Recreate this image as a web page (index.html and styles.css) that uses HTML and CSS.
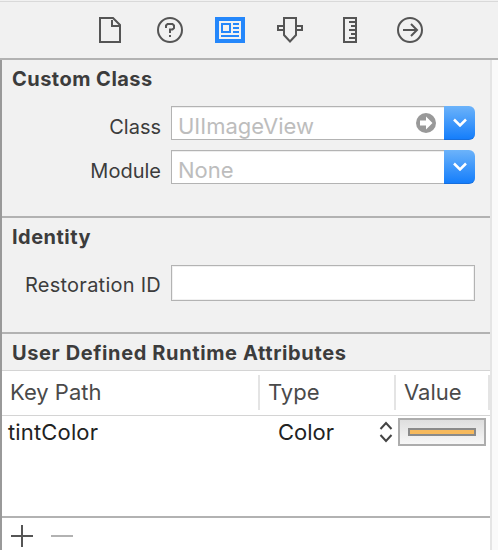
FILE: index.html
```html
<!DOCTYPE html>
<html lang="en">
<head>
<meta charset="utf-8">
<title>Identity Inspector</title>
<link rel="stylesheet" href="styles.css">
</head>
<body>
<div class="inspector">
  <nav class="toolbar">
    <svg class="icon" viewBox="0 0 30 26"><path d="M5 1h13l7 7v17H5zM17 3v6h7"/></svg>
    <svg class="icon" viewBox="0 0 30 26"><circle cx="15" cy="13" r="12"/><path d="M11 11V8.500L12.500 7h5L19 8.500V11l-1.500 1.500H15V16M15 18v2"/></svg>
    <svg class="icon selected" viewBox="0 0 30 26"><path class="blue" d="M0 0h30v26H0z"/><path class="white" d="M4 4h22v18H4z"/><path class="glyph" d="M7 7h8v8H7zM18 7h6M18 11h6M18 15h6M6 19h18"/></svg>
    <svg class="icon" viewBox="0 0 30 26"><path d="M9 1h12v17l-6 6.500L9 18zM8 9H3v4h5M22 9h5v4h-5"/></svg>
    <svg class="icon" viewBox="0 0 30 26"><path d="M9 1h12v24H9zM14 5h6M16 9h4M14 13h6M16 17h4M14 21h6"/></svg>
    <svg class="icon" viewBox="0 0 30 26"><circle cx="15" cy="13" r="12"/><path d="M8 13h13M16 7l6 6-6 6"/></svg>
  </nav>
  <div class="body">
    <main class="content">
      <section class="group custom">
        <h2>Custom Class</h2>
        <div class="row">
          <label>Class</label>
          <div class="combo"><span>UIImageView</span>
            <svg class="go" viewBox="0 0 20 20"><circle cx="10" cy="10" r="10"/><path d="M4 7.500h6V3.500l6.500 6.500-6.500 6.500v-4H4z"/></svg></div>
          <button class="drop"><svg viewBox="0 0 14 9"><path d="M1 1.500L7 7.500l6-6"/></svg></button>
        </div>
        <div class="row">
          <label>Module</label>
          <div class="combo"><span>None</span></div>
          <button class="drop"><svg viewBox="0 0 14 9"><path d="M1 1.500L7 7.500l6-6"/></svg></button>
        </div>
      </section>
      <section class="group identity">
        <h2>Identity</h2>
        <div class="row"><label class="restoration">Restoration ID</label><div class="field"></div></div>
      </section>
      <section class="attributes">
        <h2>User Defined Runtime Attributes</h2>
        <div class="head"><span>Key Path</span><span>Type</span><span>Value</span></div>
        <div class="entry">
          <span class="key">tintColor</span>
          <span class="type">Color</span>
          <svg class="stepper" viewBox="0 0 14 22"><path d="M1.500 8L7 2l5.500 6M1.500 14L7 20l5.500-6"/></svg>
          <div class="well"><div class="swatch"></div></div>
        </div>
      </section>
      <footer class="actions">
        <svg viewBox="0 0 22 22"><path d="M0 11h22M11 0v22"/></svg>
        <svg class="remove" viewBox="0 0 22 22"><path d="M0 11h22"/></svg>
      </footer>
    </main>
    <div class="track"></div>
  </div>
</div>
</body>
</html>
```
FILE: styles.css
```css
* { box-sizing: border-box; }
body { margin: 0; font: 20px/24px Inter, "Liberation Sans", sans-serif; color: #3c3c3c; overflow: hidden; }
.inspector { width: 498px; height: 550px; display: flex; flex-direction: column; background: #f1f1f1; }
.toolbar { height: 60px; border-bottom: 2px solid #b2b2b2; padding: 17px 73px 0 95px; display: flex; gap: 30px; background: linear-gradient(#f1f1f1 1px, #d9d9d9 1px, #d9d9d9 2px, #f1f1f1 2px); }
.icon { width: 30px; height: 26px; flex: none; fill: none; stroke: #555; stroke-width: 2; overflow: visible; }
.icon .blue { fill: #2487fb; stroke: none; }
.icon .white { fill: #f1f1f1; stroke: none; }
.icon .glyph { stroke: #2487fb; }
.body { display: flex; height: 490px; }
.content { width: 490px; border-left: 2px solid #999; display: flex; flex-direction: column; }
.track { width: 8px; border-left: 2px solid #e5e5e5; background: #fafafa; }
h2 { margin: 0; padding-left: 10px; font-size: 20px; line-height: 24px; font-weight: 700; letter-spacing: .47px; white-space: nowrap; }
.group { border-bottom: 2px solid #b2b2b2; }
.custom { height: 158px; padding-top: 7px; }
.custom h2 { margin-bottom: 15px; }
.identity { height: 116px; padding-top: 7px; }
.identity h2 { margin-bottom: 16px; }
.row { display: flex; height: 34px; margin-bottom: 10px; }
label { width: 159px; margin-right: 10px; text-align: right; padding-top: 9px; white-space: nowrap; }
.restoration { letter-spacing: .25px; padding-top: 8px; }
.combo { width: 273px; background: #fff; border: 1px solid #b3b3b3; border-right: 0; box-shadow: inset 0 1px #eee; color: #bdbdbd; font-size: 22px; padding: 7px 8px 0 6px; display: flex; justify-content: space-between; }
.go { width: 20px; height: 20px; margin-top: -1px; fill: #999; }
.go path { fill: #fff; }
.drop { width: 31px; height: 34px; border: 0; border-bottom: 1px solid #176edc; border-radius: 0 6px 6px 0; padding: 0; background: linear-gradient(#6cb3fa, #157efb); display: flex; align-items: center; justify-content: center; }
.drop svg { width: 14px; height: 9px; fill: none; stroke: #fff; stroke-width: 2.5; }
.field { width: 304px; height: 36px; border: 1px solid #b3b3b3; background: #fff; box-shadow: inset 0 0 0 1px #f1f1f1; }
.attributes { height: 182px; background: #fff; }
.attributes h2 { height: 36px; padding-top: 7px; background: #f1f1f1; letter-spacing: .62px; }
.head { height: 46px; border: 1px solid #d4d4d4; border-width: 1px 0; display: grid; grid-template-columns: 258px 136px 94px; padding: 4px 0 5px; color: #4a4a4a; font-size: 22px; }
.head span { border-right: 2px solid #e4e4e4; padding: 5px 0 0 8px; }
.entry { display: flex; color: #222; font-size: 22px; }
.entry span { width: 270px; padding: 4px 0 0 6px; }
.entry .key { letter-spacing: .15px; }
.entry .type { width: 109px; }
.stepper { width: 14px; height: 22px; margin: 5px 3px 0 -2px; fill: none; stroke: #444; stroke-width: 2; }
.well { width: 88px; height: 28px; margin: 2px 0 0 2px; border: 2px solid #adadad; padding: 8px; background: linear-gradient(#dedede, #f7f7f7); }
.swatch { height: 8px; border: 2px solid #8a8a8a; background: #f6b95c; }
.actions { height: 34px; border-top: 2px solid #b2b2b2; background: #fff; padding: 7px 9px; display: flex; gap: 18px; }
.actions svg { width: 22px; height: 22px; stroke: #555; stroke-width: 2; }
.actions .remove { stroke: #b2b2b2; }
```
